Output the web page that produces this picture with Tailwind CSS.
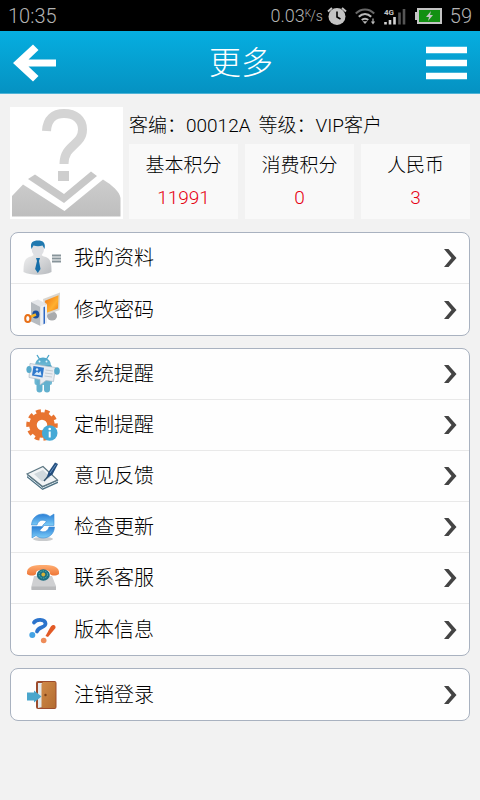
<!DOCTYPE html>
<html lang="zh-CN">
<head>
    <meta charset="UTF-8">
    <meta name="viewport" content="width=device-width, initial-scale=1.0">
    <title>更多</title>
    <script src="https://cdn.jsdelivr.net/npm/@tailwindcss/browser@4"></script>
</head>
<body class="min-h-screen bg-[#f2f2f2] font-['Roboto','Noto_Sans_CJK_SC',sans-serif] font-light text-black">
    <!-- Status bar -->
    <div class="flex h-[31px] items-center justify-between bg-black px-2 text-xl text-[#b4b4b4]">
        <span>10:35</span>
        <div class="flex items-center gap-2">
            <span class="flex items-center text-lg">0.03<span class="flex text-[10px]"><span class="pb-1">K</span><span class="-ml-px text-sm">/s</span></span></span>
            <svg class="-ml-1 h-5 w-5" viewBox="0 0 20 20" aria-hidden="true">
                <circle cx="10" cy="10.5" r="8.5" fill="#c4c4c4"/>
                <path d="M1 5.5 5 2M19 5.5 15 2" stroke="#c4c4c4" stroke-width="2"/>
                <path d="M10 5.5V11l3.5 2" fill="none" stroke="#000" stroke-width="1.6"/>
            </svg>
            <svg class="h-5 w-5" viewBox="0 0 20 20" fill="none" stroke="#b8b8b8" stroke-width="2" aria-hidden="true">
                <path d="M.8 7.5C6 2 14 2 19.2 7.5" stroke="#666"/>
                <path d="M3.8 10.8C7.5 7 12.5 7 16.2 10.8M6.8 14C8.500 12.2 11.500 12.2 13.2 14"/>
                <path d="M7.500 15.200h5L10 18z" fill="#b8b8b8" stroke="none"/>
                <path d="M18 12.500v5M16.500 15.500l1.500 2 1.500-2" stroke-width="1.200"/>
            </svg>
            <svg class="h-5 w-6" viewBox="0 0 24 20" aria-hidden="true">
                <path d="M2.500 16v2.500M7 14v4.500M11.500 11v7.500" stroke="#d4d4d4" stroke-width="2.600"/>
                <path d="M16.500 6.500v12M21 3v15.500" stroke="#555" stroke-width="2.600"/>
                <text x="1" y="9" fill="#c4c4c4" font-size="8" font-weight="700">4G</text>
            </svg>
            <svg class="h-4 w-[27px]" viewBox="0 0 27 16" aria-hidden="true">
                <rect x="3" y="1" width="23" height="14" fill="#129012" stroke="#c4c4c4" stroke-width="2"/>
                <path d="M0 4h3v8H0z" fill="#c4c4c4"/>
                <path d="M16 3 11 9h3l-1 4 5-6h-3z" fill="#c4c4c4"/>
            </svg>
            <span>59</span>
        </div>
    </div>

    <!-- Title bar -->
    <header class="flex h-[63px] items-center justify-between border-b border-[#4fb3d6] bg-linear-to-b from-[#06aee0] to-[#0592c2] px-3 pt-0.5 text-white">
        <button type="button" aria-label="返回">
            <svg class="h-10 w-11" viewBox="0 0 44 40" aria-hidden="true">
                <path d="M1 20 21 1.500 26.500 7 16.500 16.500H44v7H16.500L26.500 33 21 38.500z" fill="#fff"/>
            </svg>
        </button>
        <h1 class="text-[32px] leading-10">更多</h1>
        <button type="button" aria-label="菜单">
            <svg class="h-9 w-[42px]" viewBox="0 0 42 36" aria-hidden="true">
                <path d="M0 5h41M0 18h41M0 31h41" stroke="#fff" stroke-width="6.500"/>
            </svg>
        </button>
    </header>

    <main class="flex flex-col gap-3 px-[10px] pt-3">
        <!-- Profile -->
        <section class="flex gap-[6px]">
            <svg class="h-[114px] w-[113px] shrink-0" viewBox="0 0 113 114" role="img" aria-label="头像">
                <defs>
                    <linearGradient id="gray" x2="0" y2="1"><stop stop-color="#cdcdcd"/><stop offset="1" stop-color="#bebebe"/></linearGradient>
                </defs>
                <rect y="1" width="113" height="112" fill="#fff"/>
                <path d="M36.500 25C37 13 44 7.500 54 7.500c11 0 18.500 6 18.500 16 0 16-18.500 15-18.500 34.500" fill="none" stroke="#d4d4d4" stroke-width="9"/>
                <path d="M48 65h11v10H48z" fill="#cecece"/>
                <path d="M18 73 25 68.500 54 88 81 65.500 87 70 54 97z" fill="#c8c8c8"/>
                <path d="M2 90 13 78.500 54.500 105 93 73.500C102 79 110 86 110.500 92v18.500H2z" fill="url(#gray)"/>
            </svg>
            <div class="flex flex-1 flex-col text-[19px]">
                <p class="flex h-[38px] items-end gap-2 pb-1 whitespace-nowrap"><span>客编：00012A</span><span>等级：VIP客户</span></p>
                <dl class="grid grid-cols-3 gap-[7px] text-center">
                    <div class="flex h-[75px] flex-col justify-center bg-[#f9f9f9]">
                        <dt class="leading-8">基本积分</dt>
                        <dd class="leading-8 text-[#e60012]">11991</dd>
                    </div>
                    <div class="flex h-[75px] flex-col justify-center bg-[#f9f9f9]">
                        <dt class="leading-8">消费积分</dt>
                        <dd class="leading-8 text-[#e60012]">0</dd>
                    </div>
                    <div class="flex h-[75px] flex-col justify-center bg-[#f9f9f9]">
                        <dt class="leading-8">人民币</dt>
                        <dd class="leading-8 text-[#e60012]">3</dd>
                    </div>
                </dl>
            </div>
        </section>

        <!-- Shared chevron and gradients -->
        <svg class="absolute h-0 w-0" aria-hidden="true">
            <symbol id="chevron" viewBox="0 0 14 20"><path d="M1 1h4.500l8 9-8 9H1l7.500-9z" fill="#444"/></symbol>
            <linearGradient id="silver" x2="1" y2="1"><stop stop-color="#f2f2f2"/><stop offset="1" stop-color="#b8bbbf"/></linearGradient>
            <linearGradient id="screen" x2="1" y2="1"><stop stop-color="#f07010"/><stop offset=".6" stop-color="#ffb030"/><stop offset="1" stop-color="#f07a10"/></linearGradient>
            <linearGradient id="blue" x2="0" y2="1"><stop stop-color="#2b7fd6"/><stop offset="1" stop-color="#7ccdf8"/></linearGradient>
            <linearGradient id="droid" x2="0" y2="1"><stop stop-color="#4ba5c9"/><stop offset="1" stop-color="#73bbd5"/></linearGradient>
            <linearGradient id="phone" x2="0" y2="1"><stop stop-color="#ffae72"/><stop offset="1" stop-color="#ee7638"/></linearGradient>
            <linearGradient id="door" x2="1" y2="1"><stop stop-color="#d08a48"/><stop offset="1" stop-color="#b36c30"/></linearGradient>
        </svg>

        <nav class="flex flex-col gap-3 text-xl">
            <div class="divide-y divide-[#e9e9e9] rounded-lg border border-[#a9b2c0] bg-[#fefefe]">
                <a href="#" class="flex h-[51px] items-center gap-3 pr-3 pl-[11px]">
                    <svg class="h-10 w-10" viewBox="0 0 40 40" aria-hidden="true">
                        <path d="M1.500 34C1.500 26 2 21 7 19c4-1 5-2 5-4h7c0 2 1 3 5 4 5 2 5.500 7 5.500 15-7 3.500-21 3.500-28 0z" fill="url(#silver)"/>
                        <ellipse cx="15.800" cy="11" rx="6.200" ry="7.500" fill="#dfe0e3"/>
                        <path d="M9.500 11C7.500 4.500 11 2.500 16 2.500S24 5 22.500 11l-2-3.500c-3 1-6 1-9 0z" fill="#2079b0"/>
                        <path d="M14 20h4l-1 3 1.500 8-2.700 4-2.700-4L15 23z" fill="#176fa9"/>
                        <path d="M30 17.500h9M30 20.500h9M30 23.500h9" stroke="#87949a" stroke-width="1.900"/>
                    </svg>
                    <span class="flex-1">我的资料</span>
                    <svg class="h-5 w-[14px]" aria-hidden="true"><use href="#chevron"/></svg>
                </a>
                <a href="#" class="flex h-[51px] items-center gap-3 pr-3 pl-[11px]">
                    <svg class="h-10 w-10" viewBox="0 0 40 40" aria-hidden="true">
                        <ellipse cx="30" cy="26" rx="5" ry="4.500" fill="#a9abad"/>
                        <path d="M21 9 38 2.500 37.500 20 24 25z" fill="#d9d6d0"/>
                        <path d="M23 10.800 36.500 5.300 36 18.500 24 23z" fill="url(#screen)"/>
                        <path d="M9 12 16 9.500 25 14 18.500 17z" fill="#e4e6e9"/>
                        <path d="M9 12 18.500 17V36L9 31.500z" fill="#b6bbc0"/>
                        <path d="M18.500 17 25 14v19l-6.500 3z" fill="#eceff3"/>
                        <path d="M21.500 17.200 23 16.500v17l-1.500.7z" fill="#2d68c4"/>
                        <ellipse cx="13.800" cy="24.500" rx="3.500" ry="4" fill="#1c4f9c"/>
                        <path d="M14 24.500 8 27" stroke="#f4b326" stroke-width="2.500"/>
                        <ellipse cx="5.800" cy="28.500" rx="2.600" ry="3.600" fill="none" stroke="#e87018" stroke-width="2"/>
                    </svg>
                    <span class="flex-1">修改密码</span>
                    <svg class="h-5 w-[14px]" aria-hidden="true"><use href="#chevron"/></svg>
                </a>
            </div>

            <div class="divide-y divide-[#e9e9e9] rounded-lg border border-[#a9b2c0] bg-[#fefefe]">
                <a href="#" class="flex h-[51px] items-center gap-3 pr-3 pl-[11px]">
                    <svg class="h-10 w-10" viewBox="0 0 40 40" aria-hidden="true">
                        <path d="M15 1l2.500 4M27 1l-2.500 4" stroke="#4ba5c9" stroke-width="1.300"/>
                        <path d="M13 12C13 .5 29 .5 29 12z" fill="url(#droid)"/>
                        <circle cx="17.500" cy="7.500" r="1" fill="#dff3fa"/><circle cx="24.500" cy="7.500" r="1" fill="#dff3fa"/>
                        <rect x="12.500" y="11" width="17.500" height="20" rx="2" fill="url(#droid)"/>
                        <rect x="14.500" y="26" width="6" height="12.500" rx="3" fill="#62b0ce"/><rect x="22" y="26" width="6" height="12.500" rx="3" fill="#62b0ce"/>
                        <path d="M8 9.500 33.500 13.500 31.500 27.500 24 26.500 18 31V25.500L7 23.500z" fill="#e8ecf1" stroke="#a9b9c5" stroke-width=".7"/>
                        <path d="M11.500 12 22 13.700 20.500 23.500 10 21.500z" fill="#2f79cc"/>
                        <path d="M12 20.500 15 17.500 16.500 19 18.500 17 19.500 21.500z" fill="#d5e9fa"/><circle cx="15" cy="15.500" r="1.200" fill="#d5e9fa"/>
                        <path d="M23.500 16l7.500 1M23 19l7.500 1M22.500 22l7.500 1" stroke="#c3ccd4"/>
                        <ellipse cx="7" cy="15.500" rx="2.600" ry="3.600" fill="#57aacb"/><ellipse cx="35" cy="17" rx="2.800" ry="3.800" fill="#57aacb"/>
                    </svg>
                    <span class="flex-1">系统提醒</span>
                    <svg class="h-5 w-[14px]" aria-hidden="true"><use href="#chevron"/></svg>
                </a>
                <a href="#" class="flex h-[51px] items-center gap-3 pr-3 pl-[11px]">
                    <svg class="h-10 w-10" viewBox="0 0 40 40" aria-hidden="true">
                        <circle cx="20" cy="20" r="9" fill="none" stroke="#e87430" stroke-width="7.500"/>
                        <circle cx="20" cy="20" r="13.500" fill="none" stroke="#e87430" stroke-width="4.500" stroke-dasharray="4.700 3.782" stroke-dashoffset="2"/>
                        <circle cx="27.700" cy="28" r="7.800" fill="#45a9d6"/>
                        <path d="M27.700 26.500v6" stroke="#fff" stroke-width="2"/><circle cx="27.700" cy="24" r="1.300" fill="#fff"/>
                    </svg>
                    <span class="flex-1">定制提醒</span>
                    <svg class="h-5 w-[14px]" aria-hidden="true"><use href="#chevron"/></svg>
                </a>
                <a href="#" class="flex h-[51px] items-center gap-3 pr-3 pl-[11px]">
                    <svg class="h-10 w-10" viewBox="0 0 40 40" aria-hidden="true">
                        <path d="M5 18.500V21.500L20.500 34 36 27V24z" fill="#4d7183"/>
                        <path d="M5 19.500 20.500 32 36 25" fill="none" stroke="#dbe6ec" stroke-width="1"/>
                        <path d="M5 18 21 10.500 35.500 24 20.500 30.500z" fill="#f1f4f6" stroke="#5d7783" stroke-width="1.200"/>
                        <path d="M12 18 21 14 28.500 21.500 20 25.500z" fill="#cfd8dd"/>
                        <path d="M24 23 26.500 16 33 6.500 36 8 30.500 18.500z" fill="#234d7c"/>
                        <path d="M28 17 34 8.500" stroke="#6795c5"/>
                        <path d="M22 25 26 20.500" stroke="#35546e" stroke-width="1.500"/>
                    </svg>
                    <span class="flex-1">意见反馈</span>
                    <svg class="h-5 w-[14px]" aria-hidden="true"><use href="#chevron"/></svg>
                </a>
                <a href="#" class="flex h-[51px] items-center gap-3 pr-3 pl-[11px]">
                    <svg class="h-10 w-10" viewBox="0 0 40 40" aria-hidden="true">
                        <ellipse cx="21" cy="32" rx="10" ry="2" fill="#c9cbcd"/>
                        <path d="M9.500 18C10 10 16 7 21 7c3 0 5 1 7 2.500L32 7V18.500H20.500l4-4C20 11.500 16 14 15 18z" fill="url(#blue)" stroke="#3b8bd4" stroke-width=".6"/>
                        <path d="M32.500 20C32 28 26 31 21 31c-3 0-5-1-7-2.500L10 31V19.500h11.500l-4 4C22 26.500 26 24 27 20z" fill="url(#blue)" stroke="#3b8bd4" stroke-width=".6"/>
                    </svg>
                    <span class="flex-1">检查更新</span>
                    <svg class="h-5 w-[14px]" aria-hidden="true"><use href="#chevron"/></svg>
                </a>
                <a href="#" class="flex h-[51px] items-center gap-3 pr-3 pl-[11px]">
                    <svg class="h-10 w-10" viewBox="0 0 40 40" aria-hidden="true">
                        <path d="M12 18H30L34 28V31.500H9.500V28z" fill="#cfd0d2"/>
                        <path d="M9.500 28.500H34V32H9.500z" fill="#b9babc"/>
                        <path d="M5 16C4 8 12 7 21 7s17 1 16 9c-3 2-7 2-9 0 0-3-1-4-7-4s-7 1-7 4c-2 2-6 2-9 0z" fill="url(#phone)"/>
                        <ellipse cx="21.300" cy="17" rx="6.500" ry="5.800" fill="#1d6e82"/>
                        <ellipse cx="21.300" cy="16.500" rx="4.200" ry="3.700" fill="none" stroke="#58b9b2" stroke-dasharray="1.500 1"/>
                        <circle cx="21.300" cy="16.500" r="1.900" fill="#d5b23a"/>
                    </svg>
                    <span class="flex-1">联系客服</span>
                    <svg class="h-5 w-[14px]" aria-hidden="true"><use href="#chevron"/></svg>
                </a>
                <a href="#" class="flex h-[51px] items-center gap-3 pr-3 pl-[11px]">
                    <svg class="h-10 w-10" viewBox="0 0 40 40" aria-hidden="true">
                        <path d="M12 12.500C14 9 23 8.500 23.500 13.500c.3 4.500-7 3-8.500 8" fill="none" stroke="#2c74cc" stroke-width="3.800" stroke-linecap="round"/>
                        <circle cx="10.300" cy="25" r="3" fill="#43a3e4"/>
                        <path d="M28.500 17C30.500 14 34 14.500 33.500 18L26 27 23.500 26z" fill="#e25a26"/>
                        <circle cx="21.700" cy="30.500" r="2.800" fill="#ee8c58"/>
                    </svg>
                    <span class="flex-1">版本信息</span>
                    <svg class="h-5 w-[14px]" aria-hidden="true"><use href="#chevron"/></svg>
                </a>
            </div>

            <div class="rounded-lg border border-[#a9b2c0] bg-[#fefefe]">
                <a href="#" class="flex h-[51px] items-center gap-3 pr-3 pl-[11px]">
                    <svg class="h-10 w-10" viewBox="0 0 40 40" aria-hidden="true">
                        <rect x="14" y="6" width="20.500" height="28" rx="2" fill="#9c4b2c"/>
                        <path d="M16 8h5v24l-5 1z" fill="#e4eaee"/>
                        <path d="M19.500 9 21 7H33.500V33H21l-1.500-1z" fill="url(#door)"/>
                        <circle cx="23.500" cy="20" r="1.200" fill="#7c4018"/>
                        <path d="M5 17.500h7V15.500L19.500 21.500 12 27.500V25.500H5z" fill="#4aa6cc"/>
                    </svg>
                    <span class="flex-1">注销登录</span>
                    <svg class="h-5 w-[14px]" aria-hidden="true"><use href="#chevron"/></svg>
                </a>
            </div>
        </nav>
    </main>
</body>
</html>
